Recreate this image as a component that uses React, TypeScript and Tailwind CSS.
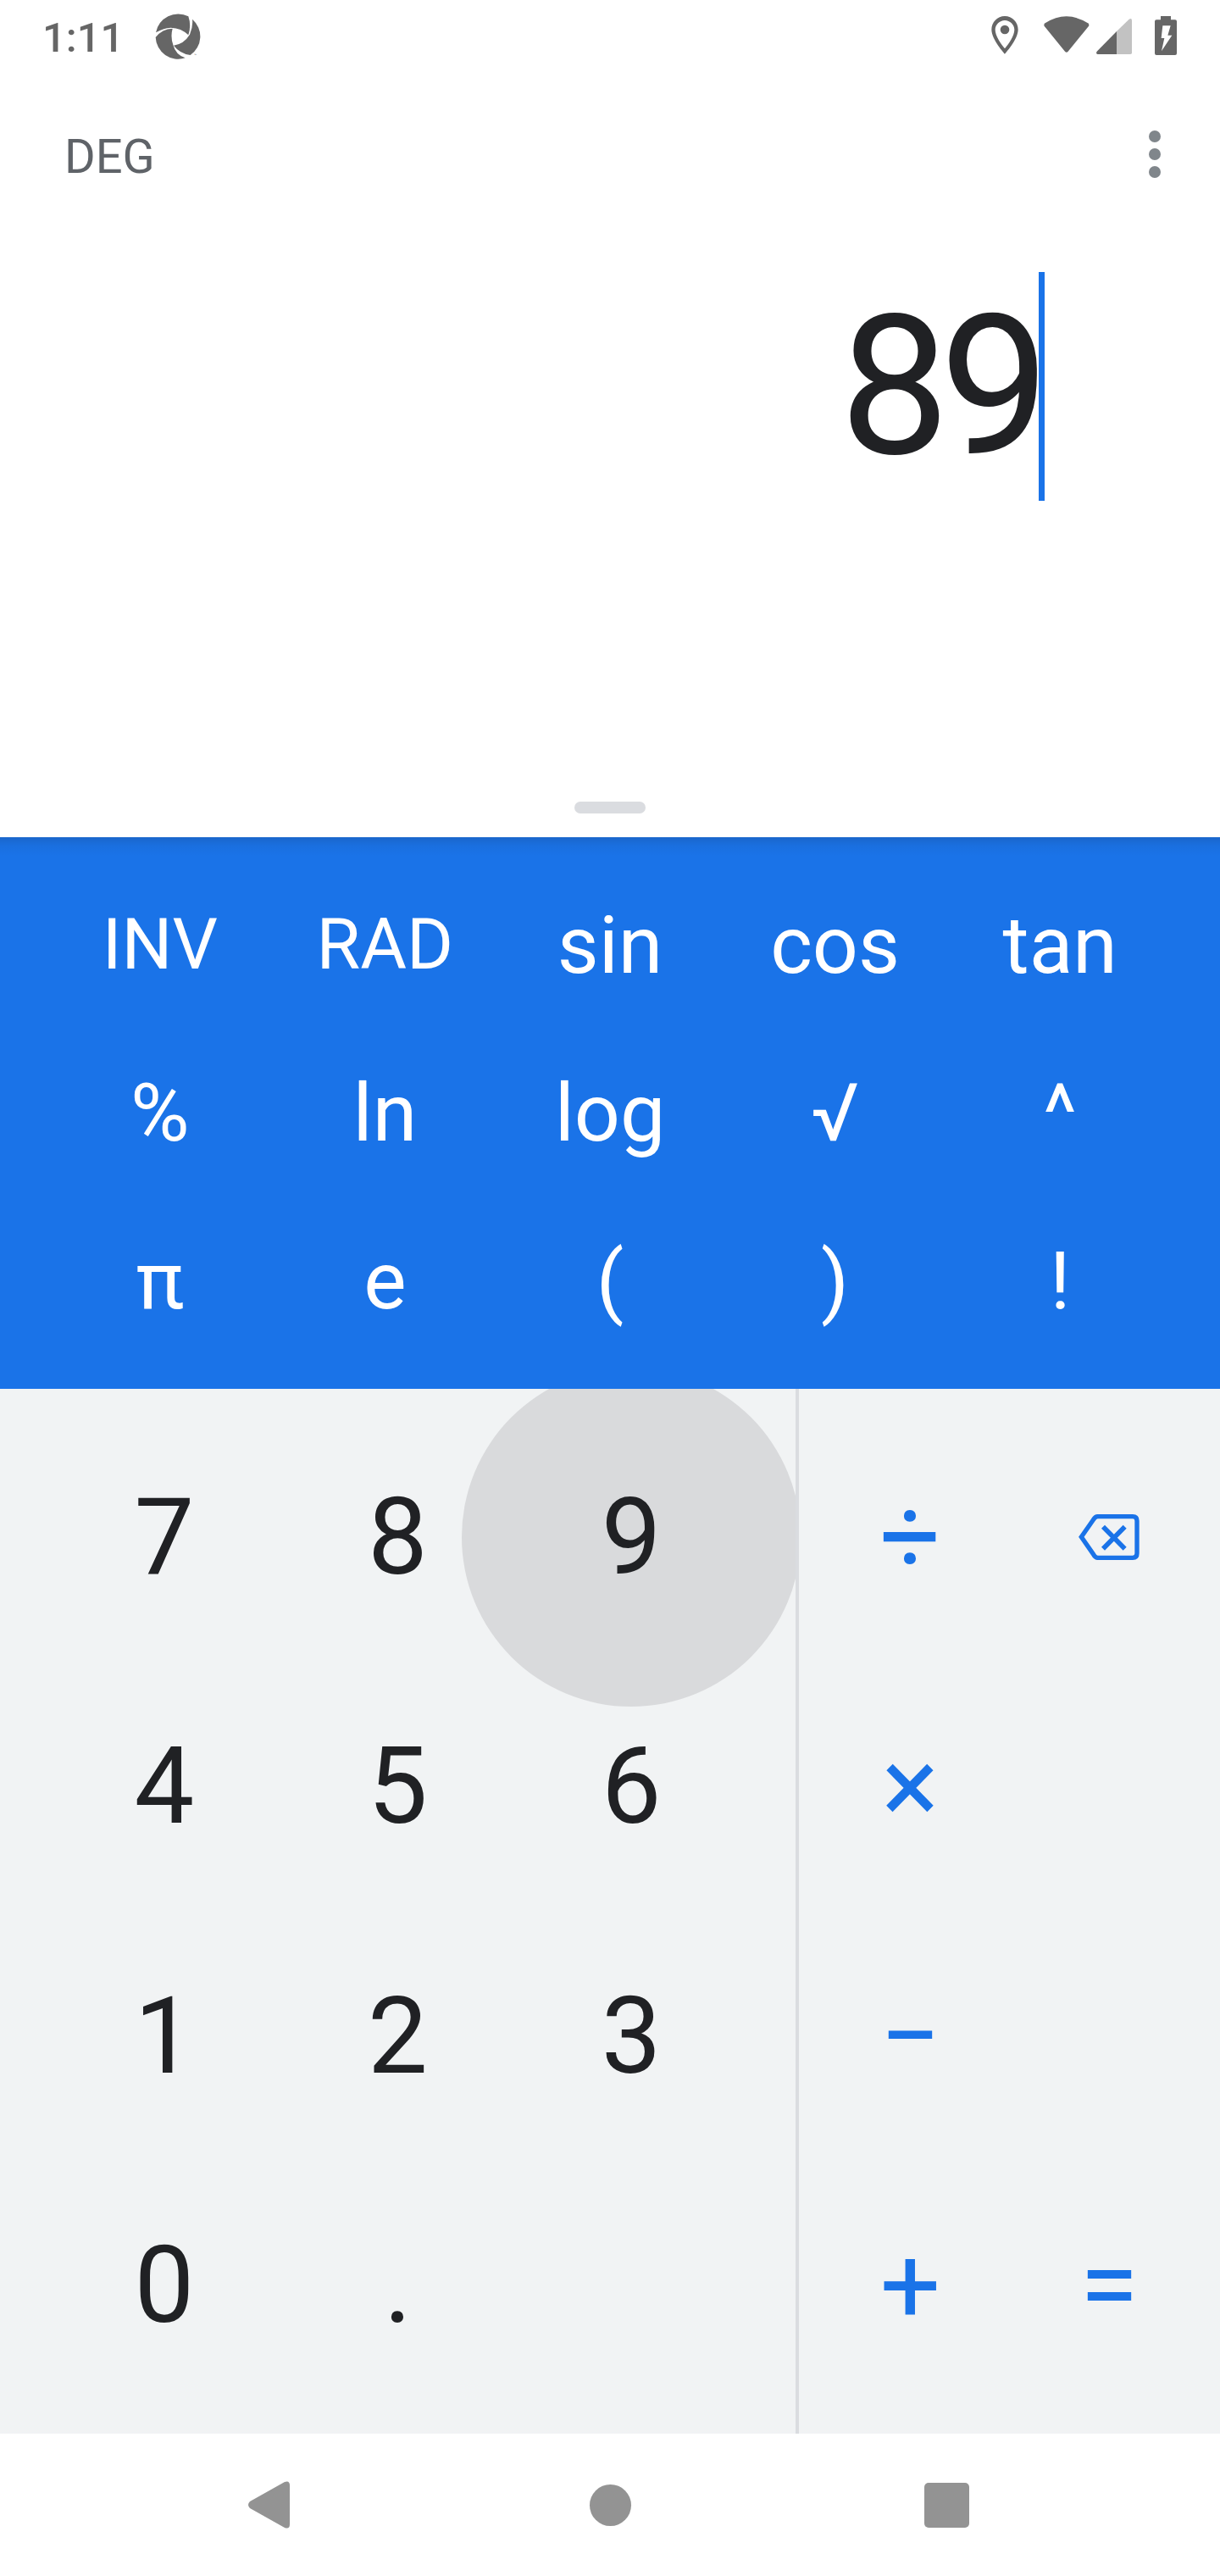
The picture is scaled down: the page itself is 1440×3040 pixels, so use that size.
import React from "react";

const scientificKeys = [
  ["INV", "RAD", "sin", "cos", "tan"],
  ["%", "ln", "log", "√", "^"],
  ["π", "e", "(", ")", "!"],
];

const digitKeys = ["7", "8", "9", "4", "5", "6", "1", "2", "3", "0", "."];

function ApertureLogo() {
  return (
    <svg width="54" height="54" viewBox="547 46 162 162" fill="#666666">
      <path d="M550 113A80 80 0 0 1 665 56Q676 88 665 122Q640 97 603 96Q575 98 550 113Z" />
      <path d="M679 66A80 80 0 0 1 672 193Q635 188 613 159Q650 153 670 120Q682 92 679 66Z" />
      <path d="M549 130A80 80 0 0 0 654 203Q620 192 611 157Q601 128 609 99Q572 100 549 130Z" />
      <text x="686" y="198" fontSize="14" fontFamily="Roboto, sans-serif">™</text>
    </svg>
  );
}

function LocationIcon() {
  return (
    <svg width="32" height="45" viewBox="150 57 96 135" fill="#666666">
      <path
        fillRule="evenodd"
        d="M198 57C172 57 151 78 151 105C151 140 198 191 198 191C198 191 245 140 245 105C245 78 224 57 198 57ZM198 72C216 72 232 87 232 105C232 127 212 155 198 172C184 155 164 127 164 105C164 87 180 72 198 72Z"
      />
      <circle cx="198" cy="105" r="16" />
    </svg>
  );
}

function WifiIcon() {
  return (
    <svg width="54" height="43" viewBox="335 58 162 129" fill="#666666">
      <path d="M338 95Q333 88 340 83Q415 35 491 83Q498 88 493 95L421 183Q415.500 189 410 183Z" />
    </svg>
  );
}

function SignalIcon() {
  return (
    <svg width="42" height="42" viewBox="522 65 126 126">
      <path d="M594 110L638 67Q648 62 648 72V186Q648 191 643 191H594Z" fill="#c2c2c2" />
      <path d="M594 110V191H527Q519 189 524 181Z" fill="#666666" />
    </svg>
  );
}

function BatteryIcon() {
  return (
    <svg width="26" height="46" viewBox="729 57 78 138">
      <path
        d="M750 57H786V70H801Q807 70 807 76V189Q807 195 801 195H735Q729 195 729 189V76Q729 70 735 70H750Z"
        fill="#666666"
      />
      <path d="M757 91H785L775 125H790L753 181L763 135H752Z" fill="#ffffff" />
    </svg>
  );
}

function BackspaceIcon() {
  return (
    <svg width="72" height="56" viewBox="880 259 216 168" fill="none" stroke="#1a73e8">
      <path
        d="M890 342.500L932 282Q939 270 948 270H1072Q1087 270 1087 285V401Q1087 416 1072 416H948Q939 416 932 403Z"
        strokeWidth="16"
      />
      <path d="M967 306L1044 384M1044 306L967 384" strokeWidth="17" />
    </svg>
  );
}

function StatusBar() {
  return (
    <header className="flex h-[84px] items-start pl-[50px] text-[#666666]">
      <span className="w-[133px] pt-4 text-[49px] leading-[57px] font-medium">1:11</span>
      <div className="pt-4">
        <ApertureLogo />
      </div>
      <div className="ml-auto flex items-start pt-[19px] pr-[51px]">
        <LocationIcon />
        <div className="ml-[30px]">
          <WifiIcon />
        </div>
        <div className="mt-[3px] ml-2">
          <SignalIcon />
        </div>
        <div className="ml-[27px]">
          <BatteryIcon />
        </div>
      </div>
    </header>
  );
}

function Operator({ children }: { children: React.ReactNode }) {
  return <button className="flex items-center justify-center text-[126px] leading-none">{children}</button>;
}

export default function App() {
  return (
    <div className="flex h-[3040px] w-[1440px] flex-col bg-white font-['Roboto',sans-serif]">
      <StatusBar />

      <div className="flex h-[196px] items-center justify-between pr-[70px] pl-[76px]">
        <span className="pt-1.5 text-[56px] leading-[66px] text-[#5f6368]">DEG</span>
        <div className="flex flex-col gap-[7px]">
          <span className="size-3.5 rounded-full bg-[#80868b]" />
          <span className="size-3.5 rounded-full bg-[#80868b]" />
          <span className="size-3.5 rounded-full bg-[#80868b]" />
        </div>
      </div>

      <div className="flex flex-1 flex-col items-end pt-[41px]">
        <div className="mr-[207px] flex h-[270px]">
          <span className="-mr-[1.5px] text-[231px] leading-[270px] tracking-[-0.05em] text-[#202124]">89</span>
          <span className="w-[7px] bg-[#1a73e8]" />
        </div>
        <div className="mt-auto mb-7 h-3.5 w-[84px] self-center rounded-full bg-[#dadce0]" />
      </div>

      <div className="grid h-[651px] grid-cols-5 grid-rows-3 bg-[#1a73e8] bg-[linear-gradient(to_bottom,#1a66cb,#1a6fdf_10px,#1a73e8_22px)] px-14 py-7 text-white">
        {scientificKeys.flat().map((key) => (
          <button
            key={key}
            className={
              key === "INV" || key === "RAD"
                ? "text-center text-[84px] leading-[98px]"
                : "text-center text-[95px] leading-[111px]"
            }
          >
            {key}
          </button>
        ))}
      </div>

      <div className="flex h-[1233px] overflow-hidden bg-[#f1f3f4]">
        <div className="grid w-[943px] grid-cols-3 grid-rows-4 overflow-hidden border-r-4 border-[#dadce0] px-14 py-7 text-[#202124]">
          {digitKeys.map((key) => (
            <button key={key} className="relative flex items-center justify-center text-[126px] leading-[148px]">
              {key === "9" && (
                <span className="absolute top-1/2 left-1/2 size-[400px] -translate-x-1/2 -translate-y-1/2 rounded-full bg-[#d9dadc]" />
              )}
              <span className="relative">{key}</span>
            </button>
          ))}
        </div>
        <div className="grid flex-1 grid-cols-2 grid-rows-4 py-7 pr-[13.5px] pl-3.5 text-[#1a73e8]">
          <Operator>÷</Operator>
          <button className="flex items-center justify-center">
            <BackspaceIcon />
          </button>
          <Operator>×</Operator>
          <span />
          <Operator>−</Operator>
          <span />
          <Operator>+</Operator>
          <Operator>=</Operator>
        </div>
      </div>

      <nav className="flex h-[168px] items-center pl-[293px]">
        <svg width="49" height="56" viewBox="0 0 49 56" fill="#939393">
          <path d="M2 24L43 1Q49-1 49 5V51Q49 57 43 55L2 32Q-2 28 2 24Z" />
        </svg>
        <span className="ml-[354px] size-[49px] rounded-full bg-[#939393]" />
        <span className="ml-[346px] size-[53px] rounded-[5px] bg-[#939393]" />
      </nav>
    </div>
  );
}
